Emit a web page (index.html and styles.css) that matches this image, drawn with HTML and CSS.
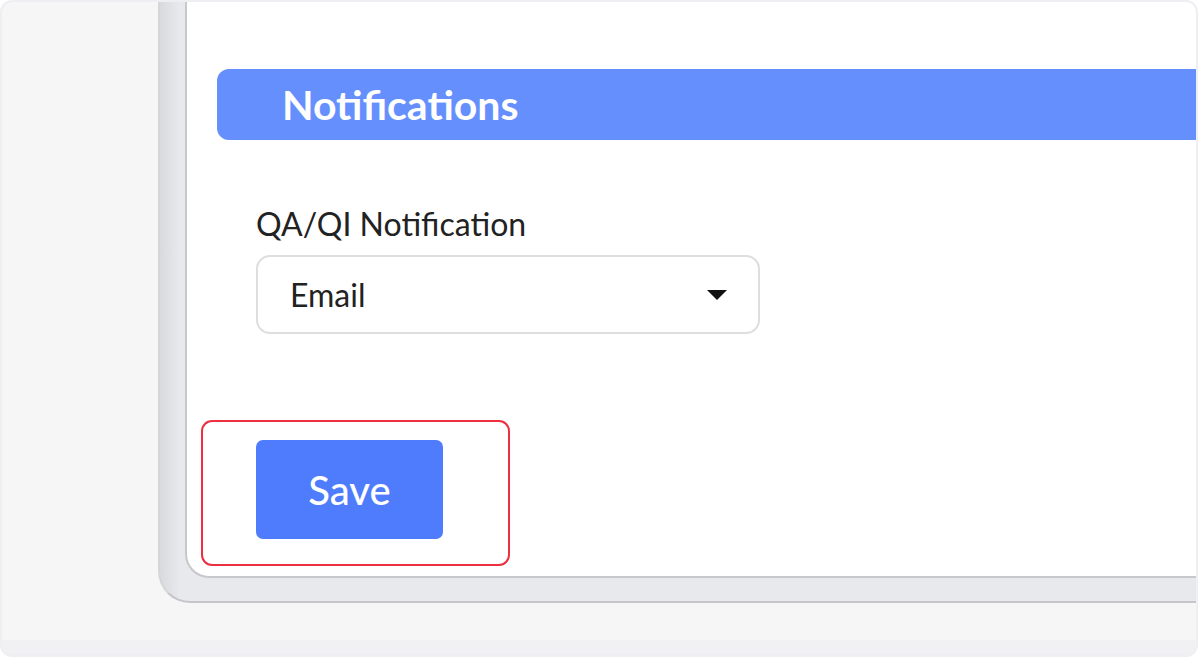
FILE: index.html
```html
<!DOCTYPE html>
<html>
<head>
    <title>Notification Settings</title>
    <link rel="stylesheet" href="styles.css">
</head>
<body>
    <div class="screen">
        <div class="device">
            <div class="card">
                <h2 class="section-title">Notifications</h2>

                <div class="field">
                    <label class="field-label" for="qa-notify">QA/QI Notification</label>
                    <div class="select">
                        <span id="qa-notify" class="select-value">Email</span>
                        <span class="caret"></span>
                    </div>
                </div>

                <div class="actions">
                    <button class="btn-save">Save</button>
                    <div class="highlight"></div>
                </div>
            </div>
        </div>
    </div>
</body>
</html>
```

FILE: styles.css
```css
body { margin: 0; background: #fff; font-family: Lato, "Open Sans", Arial, sans-serif; }
.screen { width: 1198px; height: 657px; box-sizing: border-box; border: 2px solid #efeff3; border-radius: 12px; overflow: hidden; background: linear-gradient(#f6f6f6 638px, #f1f1f3 638px); }

.device { margin-left: 156px; border-left: 2px solid #d6d6da; border-bottom: 2px solid #c6c6ca; border-bottom-left-radius: 32px; padding-left: 25px; padding-bottom: 23px; background: linear-gradient(to right, #d9dadd, #e8e9ec 20px); }
.card { height: 576px; box-sizing: border-box; padding-top: 67px; background: #fff; border-left: 2px solid #c8c8cc; border-bottom: 2px solid #c8c8cc; border-bottom-left-radius: 24px; }

.section-title { margin: 0 0 0 30px; height: 71px; padding-left: 65px; display: flex; align-items: center; background: #668ffe; border-radius: 12px 0 0 12px; color: #fff; font-size: 41px; font-weight: 700; }

.field { margin: 64px 0 0 69px; width: 504px; }
.field-label { display: block; font-size: 32px; line-height: 40px; color: #222; margin-bottom: 11px; }
.select { height: 79px; box-sizing: border-box; border: 2px solid #dedede; border-radius: 14px; display: flex; align-items: center; justify-content: space-between; padding: 0 31px 0 32px; }
.select-value { font-size: 32px; color: #222; }
.caret { width: 0; height: 0; border-left: 10px solid transparent; border-right: 10px solid transparent; border-top: 10px solid #111; }

.actions { position: relative; margin: 106px 0 0 69px; width: 187px; }
.btn-save { display: block; width: 187px; height: 99px; border: 0; border-radius: 7px; background: #4e7cfd; color: #fff; font-family: inherit; font-size: 40px; font-weight: 500; }
.highlight { position: absolute; left: -55px; top: -20px; right: -67px; bottom: -27px; border: 2px solid #ec3040; border-radius: 11px; }
```
